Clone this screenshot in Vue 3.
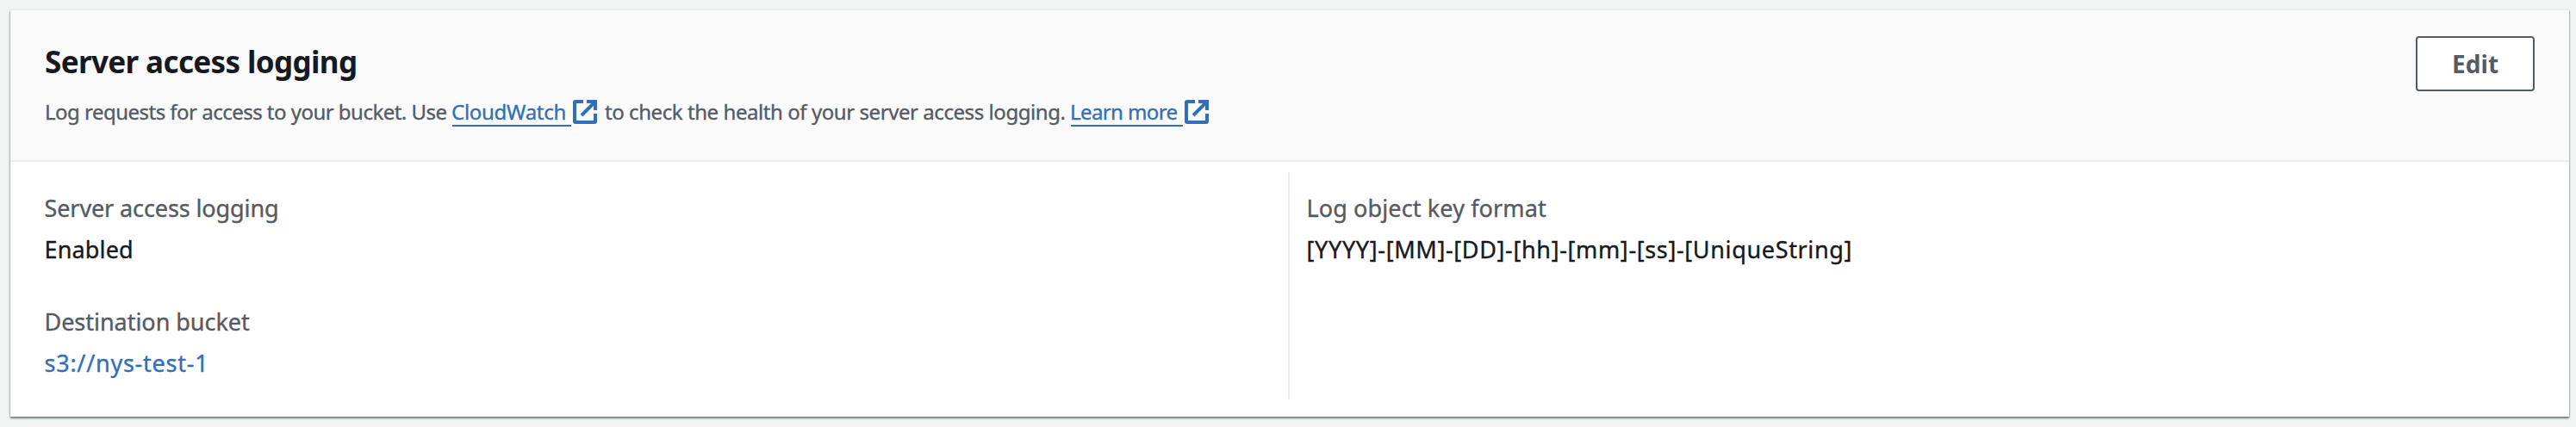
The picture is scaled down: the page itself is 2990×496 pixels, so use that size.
<script setup>
const leftFields = [
  { label: 'Server access logging', value: 'Enabled', labelClass: 'ls-label-a', valueClass: 'ls-value-a' },
  { label: 'Destination bucket', value: 's3://nys-test-1', labelClass: 'ls-label-b', valueClass: 'ls-value-b', link: true },
]
</script>

<template>
  <main class="page">
    <section class="card">
      <header class="card-header">
        <div class="heading">
          <h2>Server access logging</h2>
          <p class="description">
            <span class="intro">Log requests for access to your bucket. Use</span>
            <a class="ext cloudwatch">
              <span class="ext-text">CloudWatch</span>
              <svg class="ext-icon" viewBox="0 0 28 28" width="28" height="28">
                <path d="M12 2H3Q2 2 2 3V25Q2 26 3 26H25Q26 26 26 25V16" />
                <path d="M16 2H26V12M26 2L10 18" />
              </svg>
            </a>
            <span class="health">to check the health of your server access logging.</span>
            <a class="ext learn-more">
              <span class="ext-text">Learn more</span>
              <svg class="ext-icon" viewBox="0 0 28 28" width="28" height="28">
                <path d="M12 2H3Q2 2 2 3V25Q2 26 3 26H25Q26 26 26 25V16" />
                <path d="M16 2H26V12M26 2L10 18" />
              </svg>
            </a>
          </p>
        </div>
        <button class="edit" type="button">Edit</button>
      </header>
      <div class="columns">
        <div class="column">
          <div v-for="f in leftFields" :key="f.label" class="field">
            <div class="label" :class="f.labelClass">{{ f.label }}</div>
            <a v-if="f.link" class="value link" :class="f.valueClass">{{ f.value }}</a>
            <div v-else class="value" :class="f.valueClass">{{ f.value }}</div>
          </div>
        </div>
        <div class="column right">
          <div class="field">
            <div class="label ls-label-c">Log object key format</div>
            <div class="value ls-value-c">[YYYY]-[MM]-[DD]-[hh]-[mm]-[ss]-[UniqueString]</div>
          </div>
        </div>
      </div>
    </section>
  </main>
</template>

<style>
body {
  background: #f2f3f3;
}
</style>

<style scoped>
.page {
  box-sizing: border-box;
  height: 496px;
  padding: 12px 8px 12px 12px;
  background: #f2f3f3;
  font-family: "Noto Sans", "Open Sans", sans-serif;
  color: #16191f;
}
.card {
  box-sizing: border-box;
  height: 472px;
  background: #fff;
  box-shadow: 0 0 2px 0 rgba(0, 28, 36, 0.4), 0 2px 2px 0 rgba(0, 28, 36, 0.5);
}
.card-header {
  box-sizing: border-box;
  height: 176px;
  padding: 30px 40px 0;
  display: flex;
  justify-content: space-between;
  align-items: flex-start;
  background: #fafafa;
  border-bottom: 2px solid #eaeded;
  box-shadow: 0 -2px 0 #eaeded;
}
.heading {
  padding-top: 6px;
}
h2 {
  margin: 0 0 12px;
  font-size: 35px;
  line-height: 48px;
  font-weight: 700;
  letter-spacing: -0.622px;
}
.description {
  display: flex;
  margin: 0;
  font-size: 24px;
  line-height: 44px;
  color: #545b64;
  white-space: nowrap;
  -webkit-text-stroke: 0.35px currentColor;
}
.intro {
  width: 473px;
  letter-spacing: -0.519px;
}
.health {
  width: 541px;
  letter-spacing: -0.434px;
}
.ext {
  display: flex;
  align-items: flex-start;
  color: #2f70b8;
}
.ext-text {
  box-sizing: border-box;
  height: 39px;
  border-bottom: 2px solid #2f70b8;
  text-indent: -1px;
}
.cloudwatch {
  width: 177px;
}
.cloudwatch .ext-text {
  width: 138px;
  letter-spacing: -0.273px;
}
.learn-more .ext-text {
  width: 130px;
  letter-spacing: -0.606px;
}
.ext-icon {
  display: block;
  margin: 8px 0 0 2px;
  fill: none;
  stroke: #2f70b8;
  stroke-width: 4;
}
.edit {
  box-sizing: border-box;
  width: 138px;
  height: 64px;
  padding: 0;
  border: 2px solid #545b64;
  border-radius: 4px;
  background: #fff;
  color: #545b64;
  font: 700 28px/60px "Noto Sans", "Open Sans", sans-serif;
  letter-spacing: 0.084px;
}
.columns {
  display: grid;
  grid-template-columns: 1483px 1fr;
  padding-top: 12px;
}
.column {
  box-sizing: border-box;
  height: 264px;
  padding: 20px 0 0 40px;
  display: flex;
  flex-direction: column;
  gap: 40px;
}
.right {
  padding-left: 20px;
  border-left: 2px solid #eaeded;
}
.label,
.value {
  display: block;
  font-size: 27px;
  line-height: 44px;
  white-space: nowrap;
  text-indent: -0.5px;
  -webkit-text-stroke: 0.35px currentColor;
}
.label {
  margin-bottom: 4px;
  color: #545b64;
}
.link {
  color: #2f70b8;
}
.ls-label-a { letter-spacing: -0.108px; }
.ls-value-a { letter-spacing: 0.15px; }
.ls-label-b { letter-spacing: -0.033px; }
.ls-value-b { letter-spacing: 0.75px; }
.ls-label-c { letter-spacing: 0.123px; }
.ls-value-c { letter-spacing: 0.65px; }
</style>
